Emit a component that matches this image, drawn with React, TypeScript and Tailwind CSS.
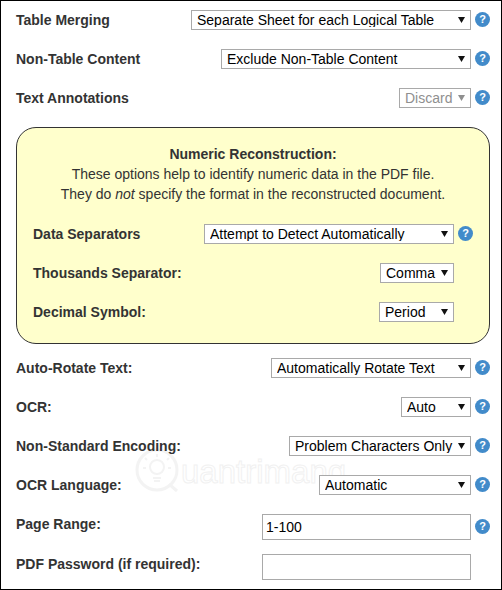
const font = { fontFamily: '"Liberation Sans", Arial, sans-serif' };

function Help() {
  return (
    <span className="flex h-[15px] w-[15px] shrink-0 -translate-y-px items-center justify-center rounded-full bg-[#428bca] text-[11px] font-bold leading-none text-white">
      ?
    </span>
  );
}

function Pick({ value, width, disabled }: { value: string; width: string; disabled?: boolean }) {
  return (
    <div className={`relative h-5 ${width}`}>
      <select
        disabled={disabled}
        defaultValue={value}
        className="block h-5 w-full appearance-none border border-[#a9a9a9] bg-white pl-[5px] text-[14px] leading-none text-black disabled:text-[#8f8f8f]"
      >
        <option>{value}</option>
      </select>
      <svg viewBox="0 0 7 6" className="pointer-events-none absolute right-[6px] top-[7px] h-[6px] w-[7px]">
        <path d="M0 0H7L3.5 6Z" fill={disabled ? '#8f8f8f' : '#111'} />
      </svg>
    </div>
  );
}

function Row({ label, children, help = true }: { label: string; children: React.ReactNode; help?: boolean }) {
  return (
    <div className="flex h-5 items-center justify-between">
      <span className="text-[14px] font-bold text-[#333]">{label}</span>
      <div className="flex items-center gap-[4px]">
        {children}
        {help ? <Help /> : <span className="w-[15px]" />}
      </div>
    </div>
  );
}

function Watermark() {
  return (
    <div className="pointer-events-none absolute left-[134px] top-[447px] -z-10 flex items-center">
      <svg viewBox="0 0 46 46" className="h-[46px] w-[46px]" fill="none" stroke="#f3f3f3">
        <circle cx="22" cy="22" r="20" strokeWidth="3" />
        <path d="M34 36l8 7" strokeWidth="3" />
        <circle cx="22" cy="19" r="7" strokeWidth="2" />
        <path d="M18 30h8M19 33h6" strokeWidth="2" />
        <path d="M22 6v3M10 10l2 2M34 10l-2 2M8 20h3M36 20h-3" strokeWidth="2" />
      </svg>
      <span className="text-[33px] leading-none text-transparent [-webkit-text-stroke:1px_#f1f1f1]">uantrimang</span>
    </div>
  );
}

export default function App() {
  return (
    <div style={font} className="relative isolate h-[590px] w-[502px] overflow-hidden border border-black bg-white pl-[15px] pr-[11px] pt-[9px]">
      <Watermark />
      <div className="flex flex-col gap-[19px]">
        <Row label="Table Merging"><Pick value="Separate Sheet for each Logical Table" width="w-[280px]" /></Row>
        <Row label="Non-Table Content"><Pick value="Exclude Non-Table Content" width="w-[250px]" /></Row>
        <Row label="Text Annotations"><Pick value="Discard" width="w-[72px]" disabled /></Row>
      </div>

      <div className="mt-[19px] h-[217px] w-[474px] rounded-[20px] border border-[#333] bg-[#ffffcc] px-4 pt-[16px]">
        <div className="text-center text-[14px] leading-5 text-[#333]">
          <div className="font-bold">Numeric Reconstruction:</div>
          <div>These options help to identify numeric data in the PDF file.</div>
          <div>They do <em>not</em> specify the format in the reconstructed document.</div>
        </div>
        <div className="mt-[20px] flex flex-col gap-[19px]">
          <Row label="Data Separators"><Pick value="Attempt to Detect Automatically" width="w-[250px]" /></Row>
          <Row label="Thousands Separator:" help={false}><Pick value="Comma" width="w-[74px]" /></Row>
          <Row label="Decimal Symbol:" help={false}><Pick value="Period" width="w-[75px]" /></Row>
        </div>
      </div>

      <div className="mt-[14px] flex flex-col gap-[19px]">
        <Row label="Auto-Rotate Text:"><Pick value="Automatically Rotate Text" width="w-[200px]" /></Row>
        <Row label="OCR:"><Pick value="Auto" width="w-[70px]" /></Row>
        <Row label="Non-Standard Encoding:"><Pick value="Problem Characters Only" width="w-[182px]" /></Row>
        <Row label="OCR Language:"><Pick value="Automatic" width="w-[152px]" /></Row>
      </div>

      <div className="mt-[19px] flex flex-col gap-[14px]">
        <div className="flex h-[26px] items-start justify-between">
          <span className="text-[14px] font-bold text-[#333]">Page Range:</span>
          <div className="flex items-center gap-[4px]">
            <input defaultValue="1-100" className="h-[26px] w-[209px] border border-[#a9a9a9] bg-white px-[3px] text-[14px] text-black" />
            <Help />
          </div>
        </div>
        <div className="flex h-[26px] items-start justify-between">
          <span className="text-[14px] font-bold text-[#333]">PDF Password (if required):</span>
          <div className="flex items-center gap-[4px]">
            <input className="h-[26px] w-[209px] border border-[#a9a9a9] bg-white" />
            <span className="w-[15px]" />
          </div>
        </div>
      </div>
    </div>
  );
}
